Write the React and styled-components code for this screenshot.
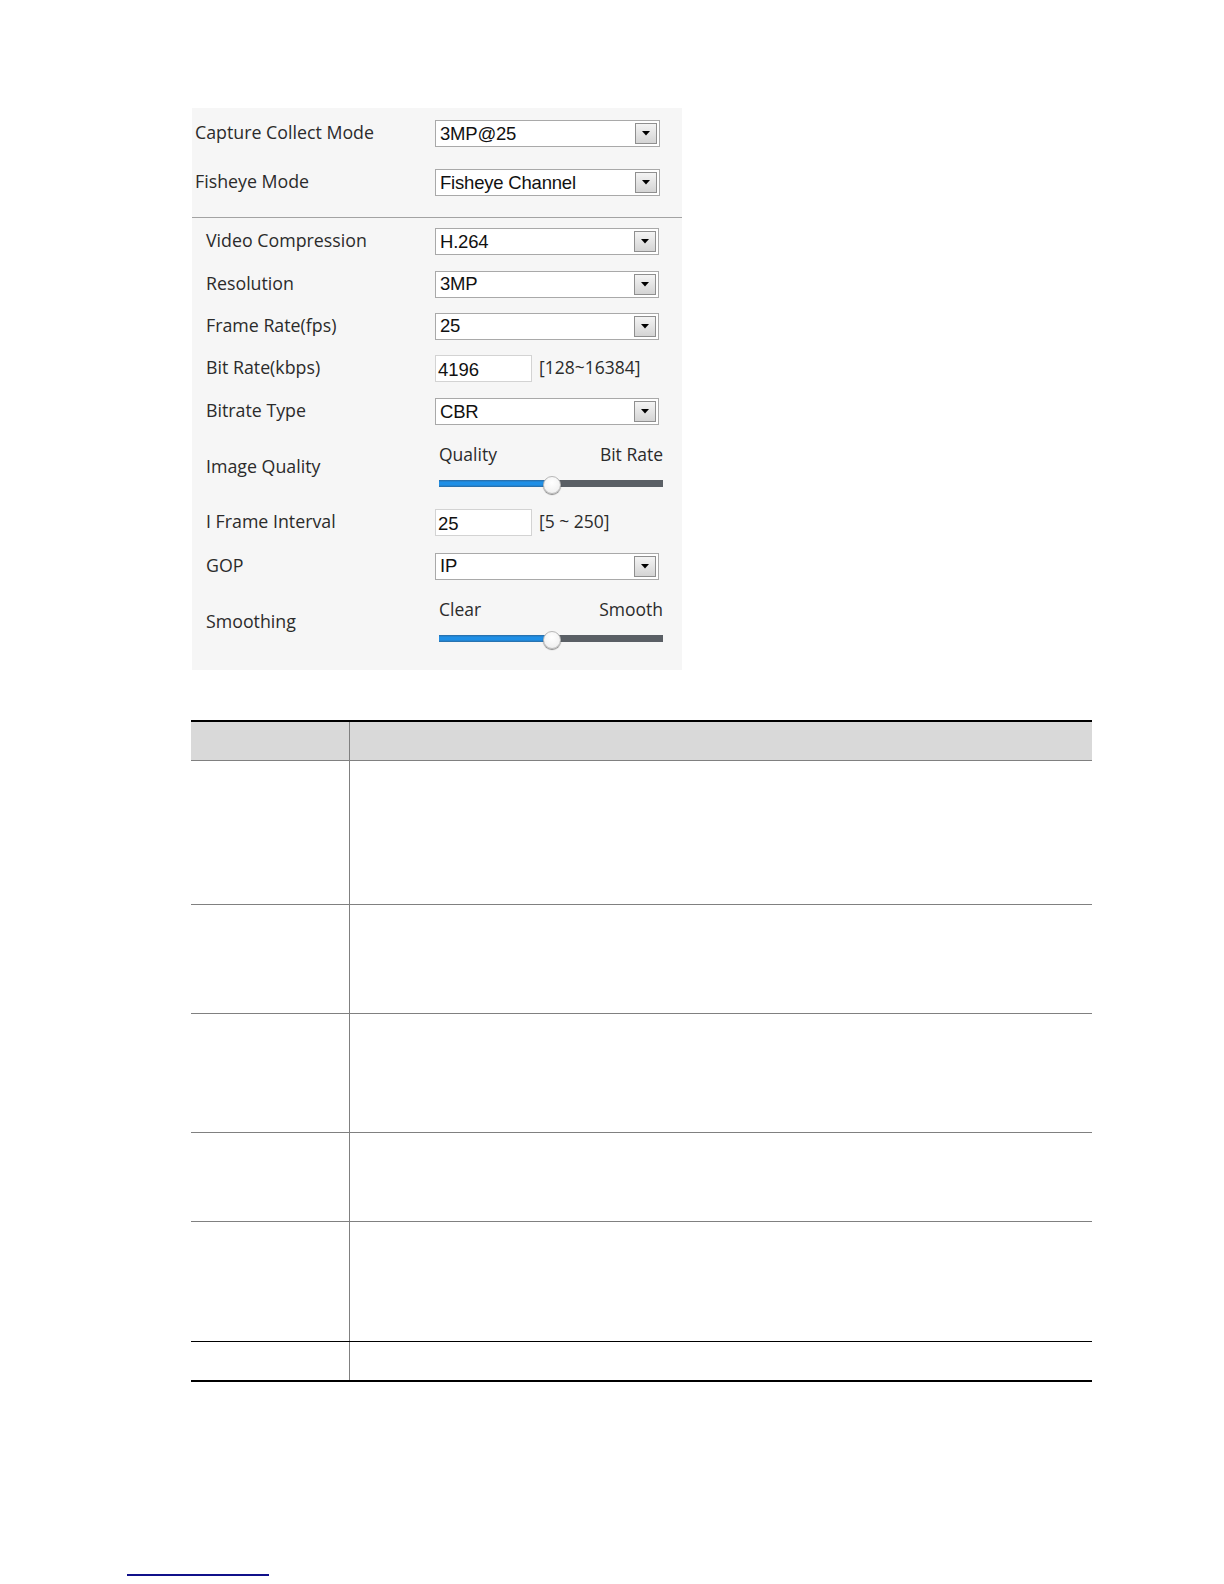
import React from 'react'
import styled, { createGlobalStyle } from "styled-components";

const GlobalStyle = createGlobalStyle`
  html, body {
    margin: 0;
    padding: 0;
    background: #ffffff;
  }
  body {
    font-family: "Open Sans", "Noto Sans", sans-serif;
  }
`;

const topRows = [
  { label: "Capture Collect Mode", value: "3MP@25" },
  { label: "Fisheye Mode", value: "Fisheye Channel" },
];

const rowHeights = [144, 109, 119, 89, 120, 39];

export default function App() {
  return (
    <Page>
      <GlobalStyle />
      <Content>
        <Panel>
          <TopSection>
            {topRows.map((r) => (
              <Row key={r.label} height={49} indent={3} labelWidth={240}>
                <Label>{r.label}</Label>
                <Select value={r.value} width={225} />
              </Row>
            ))}
          </TopSection>
          <Divider />
          <Section>
            <Row height={43}>
              <Label>Video Compression</Label>
              <Select value="H.264" />
            </Row>
            <Row height={42}>
              <Label>Resolution</Label>
              <Select value="3MP" />
            </Row>
            <Row height={42}>
              <Label>Frame Rate(fps)</Label>
              <Select value="25" />
            </Row>
            <Row height={43}>
              <Label>Bit Rate(kbps)</Label>
              <TextBox>4196</TextBox>
              <Range>[128~16384]</Range>
            </Row>
            <Row height={43}>
              <Label>Bitrate Type</Label>
              <Select value="CBR" />
            </Row>
            <Row height={68}>
              <Label>Image Quality</Label>
              <Slider left="Quality" right="Bit Rate" percent={50.5} />
            </Row>
            <Row height={43}>
              <Label>I Frame Interval</Label>
              <TextBox>25</TextBox>
              <Range>[5 ~ 250]</Range>
            </Row>
            <Row height={44}>
              <Label>GOP</Label>
              <Select value="IP" />
            </Row>
            <Row height={69}>
              <Label>Smoothing</Label>
              <Slider left="Clear" right="Smooth" percent={50.5} />
            </Row>
          </Section>
        </Panel>

        <Table>
          <thead>
            <tr>
              <HeadCell first />
              <HeadCell />
            </tr>
          </thead>
          <tbody>
            {rowHeights.map((h, i) => (
              <BodyRow key={i} height={h} dark={i >= rowHeights.length - 2} last={i === rowHeights.length - 1}>
                <Cell first />
                <Cell />
              </BodyRow>
            ))}
          </tbody>
        </Table>
      </Content>
      <Footer>
        <FooterLink href="#" />
      </Footer>
    </Page>
  );
}

function Select({ value, width }) {
  return (
    <SelectBox width={width}>
      <SelectText>{value}</SelectText>
      <DropButton>
        <svg width="8" height="5" viewBox="0 0 8 5">
          <path d="M0 0 L8 0 L4 4.5 Z" fill="#000" />
        </svg>
      </DropButton>
    </SelectBox>
  );
}

function Slider({ left, right, percent }) {
  return (
    <SliderWrap>
      <SliderLabels>
        <span>{left}</span>
        <span>{right}</span>
      </SliderLabels>
      <Track>
        <Fill style={{ width: `${percent}%` }} />
        <Thumb style={{ left: `${percent}%` }} />
      </Track>
    </SliderWrap>
  );
}

const Page = styled.div`
  padding-top: 108px;
  min-height: 1584px;
  box-sizing: border-box;
`;

const Content = styled.div`
  margin-left: 191px;
`;

const Panel = styled.div`
  margin-left: 1px;
  width: 490px;
  height: 562px;
  background: #f6f6f6;
  box-sizing: border-box;
`;

const TopSection = styled.div`
  display: flex;
  flex-direction: column;
  padding-top: 1px;
`;

const Section = styled.div`
  display: flex;
  flex-direction: column;
  padding-top: 2px;
`;

const Divider = styled.div`
  margin-top: 10px;
  height: 1px;
  background: #a3a3a3;
`;

const Row = styled.div`
  display: flex;
  align-items: center;
  height: ${(p) => p.height}px;
  padding-left: ${(p) => p.indent ?? 14}px;

  & > span:first-child {
    width: ${(p) => p.labelWidth ?? 229}px;
  }
`;

const Label = styled.span`
  flex: none;
  padding-bottom: 3px;
  font-family: "Open Sans", "Noto Sans", sans-serif;
  font-size: 17.8px;
  color: #2b2b2b;
  white-space: nowrap;
`;

const SelectBox = styled.div`
  position: relative;
  display: flex;
  align-items: center;
  width: ${(p) => p.width ?? 224}px;
  height: 27px;
  box-sizing: border-box;
  background: #ffffff;
  border: 1px solid #a9a9a9;
  padding-left: 4px;
`;

const SelectText = styled.span`
  flex: 1;
  font-family: "Liberation Sans", Arial, sans-serif;
  font-size: 18.5px;
  color: #111;
  letter-spacing: -0.2px;
  line-height: 1;
  padding-top: 1px;
`;

const DropButton = styled.div`
  display: flex;
  align-items: center;
  justify-content: center;
  width: 22px;
  height: 21px;
  margin-right: 2px;
  box-sizing: border-box;
  border: 1px solid #8f8f8f;
  background: linear-gradient(#f4f4f4, #d4d4d4);
`;

const TextBox = styled.div`
  display: flex;
  align-items: center;
  width: 97px;
  height: 27px;
  box-sizing: border-box;
  background: #ffffff;
  border: 1px solid #d3d3d3;
  padding-left: 2px;
  padding-top: 2px;
  font-family: "Liberation Sans", Arial, sans-serif;
  font-size: 18.5px;
  color: #111;
`;

const Range = styled.span`
  margin-left: 7px;
  margin-top: -3px;
  font-family: "Open Sans", "Noto Sans", sans-serif;
  font-size: 17.5px;
  color: #2b2b2b;
`;

const SliderWrap = styled.div`
  width: 224px;
  margin-left: 4px;
  align-self: flex-start;
  padding-top: 10px;
`;

const SliderLabels = styled.div`
  display: flex;
  justify-content: space-between;
  font-family: "Open Sans", "Noto Sans", sans-serif;
  font-size: 17.5px;
  line-height: 22px;
  color: #2b2b2b;
`;

const Track = styled.div`
  position: relative;
  margin-top: 15px;
  height: 7px;
  background: #5a5f65;
`;

const Fill = styled.div`
  height: 100%;
  background: linear-gradient(#2b6aa0, #1f8fe6 30%, #1f8fe6 70%, #2b6aa0);
`;

const Thumb = styled.div`
  position: absolute;
  top: 50%;
  width: 18px;
  height: 18px;
  margin-left: -9px;
  margin-top: -8px;
  border-radius: 50%;
  box-sizing: border-box;
  background: radial-gradient(circle at 50% 35%, #ffffff, #ececec);
  border: 1px solid #b8b8b8;
  box-shadow: 0 1px 1px rgba(0, 0, 0, 0.45);
`;

const Table = styled.table`
  margin-top: 50px;
  width: 901px;
  border-collapse: collapse;
  border-top: 2px solid #000;
  border-bottom: 2px solid #000;
`;

const HeadCell = styled.th`
  height: 38px;
  padding: 0;
  background: #d9d9d9;
  border-bottom: 1px solid #808080;
  border-right: ${(p) => (p.first ? "1px solid #808080" : "none")};
  width: ${(p) => (p.first ? "158px" : "auto")};
`;

const BodyRow = styled.tr`
  height: ${(p) => p.height}px;
  & > td {
    border-bottom: ${(p) => (p.last ? "2px solid #000" : p.dark ? "1px solid #000" : "1px solid #808080")};
  }
`;

const Cell = styled.td`
  padding: 0;
  border-right: ${(p) => (p.first ? "1px solid #808080" : "none")};
`;

const Footer = styled.div`
  margin-top: 192px;
  padding-left: 127px;
`;

const FooterLink = styled.a`
  display: block;
  width: 142px;
  height: 0;
  border-bottom: 2px solid #10108a;
`;
